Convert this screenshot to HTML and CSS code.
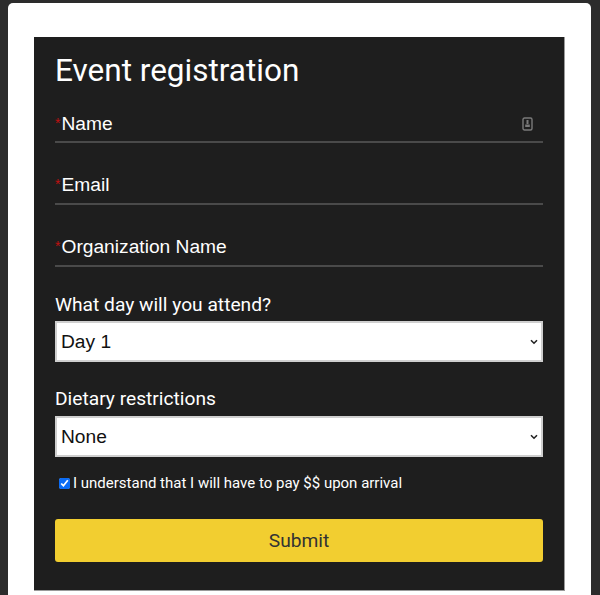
FILE: index.html
```html
<!DOCTYPE html>
<html lang="en">
<head>
<meta charset="utf-8">
<title>Event registration</title>
<link rel="stylesheet" href="styles.css">
</head>
<body>
<div class="backdrop">
  <div class="modal">
    <form class="panel">
      <h1 class="title">Event registration</h1>
      <div class="field">
        <span class="label"><span class="req">*</span>Name</span>
        <svg class="key" width="11" height="14" viewBox="0 0 11 14" aria-hidden="true">
          <rect x="1" y="1" width="9" height="12" rx="1.5" fill="none" stroke="#7a7a7a" stroke-width="1.4"/>
          <rect x="4.5" y="3" width="2" height="4" fill="#7a7a7a"/>
          <rect x="3.2" y="7.5" width="4.6" height="2.5" fill="#7a7a7a"/>
        </svg>
      </div>
      <div class="field"><span class="label"><span class="req">*</span>Email</span></div>
      <div class="field"><span class="label"><span class="req">*</span>Organization Name</span></div>
      <label class="sel-label sel-first">What day will you attend?</label>
      <div class="sel-wrap">
        <select class="sel"><option>Day 1</option></select>
        <svg class="chev" width="8" height="6" viewBox="0 0 8 6" aria-hidden="true"><path d="M1 1.2 4 4.2 7 1.2" fill="none" stroke="#222" stroke-width="1.6"/></svg>
      </div>
      <label class="sel-label sel-second">Dietary restrictions</label>
      <div class="sel-wrap">
        <select class="sel"><option>None</option></select>
        <svg class="chev" width="8" height="6" viewBox="0 0 8 6" aria-hidden="true"><path d="M1 1.2 4 4.2 7 1.2" fill="none" stroke="#222" stroke-width="1.6"/></svg>
      </div>
      <label class="check"><input type="checkbox" checked><span>I understand that I will have to pay $$ upon arrival</span></label>
      <button type="button" class="submit">Submit</button>
    </form>
  </div>
</div>
</body>
</html>
```
FILE: styles.css
```css
* { box-sizing: border-box; }
html, body { margin: 0; height: 595px; overflow: hidden; }
body { font-family: Roboto, "Liberation Sans", sans-serif; background: #2c2c2c; }
.backdrop { height: 595px; padding: 3px 9px 0 8px; }
.modal {
  background: #fff;
  height: 592px;
  border-radius: 5px 5px 0 0;
  padding: 34px 26px 0 26px;
}
.panel {
  background: #1e1e1e;
  height: 554px;
  padding: 0 21px 0 21px;
  border: 1px solid #9a9a9a;
  border-width: 0 1px 1px 0;
  display: flex;
  flex-direction: column;
}
.title {
  margin: 14px 0 0;
  font-size: 31.5px;
  font-weight: 400;
  line-height: 40px;
  color: #fff;
}
.field {
  height: 35px;
  border-bottom: 2px solid #4a4a4a;
  display: flex;
  align-items: center;
  justify-content: space-between;
  padding-right: 10px;
}
.title + .field { margin-top: 17px; }
.field + .field { margin-top: 27px; }
.label {
  font-family: "Liberation Sans", Arial, sans-serif;
  font-size: 19.2px;
  color: #fff;
  line-height: 22px;
  margin-top: -2px;
}
.field + .field .label { margin-top: -4px; }
.req { color: #c01010; font-size: 14px; vertical-align: 2px; margin-right: 1px; }
.key { display: block; margin-top: -2px; }
.sel-label { display: block; font-size: 19.2px; line-height: 22px; color: #fff; }
.sel-first { margin-top: 27px; }
.sel-second { margin-top: 26px; }
.sel-wrap { position: relative; margin-top: 5px; }
.sel-second + .sel-wrap { margin-top: 6px; }
.sel {
  display: block;
  width: 100%;
  height: 41px;
  appearance: none;
  background: #fff;
  color: #111;
  border: 2px solid #cfcfcf;
  border-radius: 0;
  font-family: "Liberation Sans", Arial, sans-serif;
  font-size: 19.2px;
  padding: 0 0 0 4px;
}
.chev { position: absolute; right: 5px; top: 18px; }
.check {
  display: flex;
  align-items: center;
  margin: 16px 0 0 4px;
  font-size: 15px;
  line-height: 20px;
  color: #fff;
}
.check input { width: 11px; height: 11px; margin: 0 3px 0 0; accent-color: #0b6cf5; }
.submit {
  display: block;
  width: 100%;
  height: 43px;
  margin-top: 26px;
  background: #f2ce30;
  color: #333;
  border: 0;
  border-radius: 3px;
  font-family: Roboto, "Liberation Sans", sans-serif;
  font-size: 19.2px;
}
```
